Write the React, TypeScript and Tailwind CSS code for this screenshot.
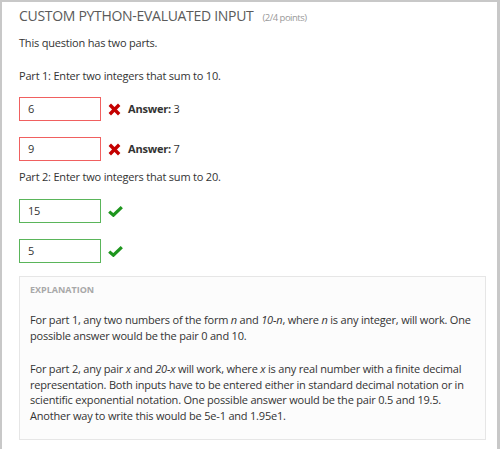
import React from 'react';

const font = { fontFamily: '"Open Sans", "Liberation Sans", sans-serif' };

const Cross = () => (
  <svg width="13" height="13" viewBox="0 0 13 13" className="shrink-0">
    <path d="M1.8 1.8 L11.2 11.2 M11.2 1.8 L1.8 11.2" stroke="#c40000" strokeWidth="3.4" />
  </svg>
);

const Check = () => (
  <svg width="15" height="11" viewBox="0 0 15 11" className="shrink-0">
    <path d="M1.2 5.6 L5.4 9.2 L13.8 1.2" stroke="#1e961e" strokeWidth="3.2" fill="none" />
  </svg>
);

interface FieldProps {
  value: string;
  ok: boolean;
  answer?: string;
}

const Field: React.FC<FieldProps> = ({ value, ok, answer }) => (
  <div className="flex items-center gap-[7px]">
    <div
      className={`w-[82px] h-[24px] flex items-center px-[8px] text-[11px] text-[#333] bg-white border ${
        ok ? 'border-[#5ab55a]' : 'border-[#f06060]'
      }`}
    >
      {value}
    </div>
    {ok ? <Check /> : <Cross />}
    {answer && (
      <span className="text-[11px] text-[#333] tracking-[-0.2px]">
        <b className="font-bold">Answer:</b> {answer}
      </span>
    )}
  </div>
);

export default function App() {
  return (
    <div className="w-[500px] h-[449px] bg-white overflow-hidden" style={font}>
      <div className="h-full border-l-2 border-t-2 border-r-[3px] border-[#c8c8c8] pl-[17px] pr-[11px] pt-[4px] text-[11px] leading-[16px] tracking-[-0.2px] text-[#333]">
        <div className="flex items-baseline gap-[9px] h-[20px] leading-[20px]">
          <h2 className="text-[14px] tracking-[-0.3px] text-[#5a5a5a] font-normal">CUSTOM PYTHON-EVALUATED INPUT</h2>
          <span className="text-[9.5px] tracking-[-0.5px] text-[#999]">(2/4 points)</span>
        </div>
        <p className="mt-[9px]">This question has two parts.</p>
        <p className="mt-[17px]">Part 1: Enter two integers that sum to 10.</p>
        <div className="mt-[13px] flex flex-col gap-[16px]">
          <Field value="6" ok={false} answer="3" />
          <Field value="9" ok={false} answer="7" />
        </div>
        <p className="mt-[8px]">Part 2: Enter two integers that sum to 20.</p>
        <div className="mt-[14px] flex flex-col gap-[16px]">
          <Field value="15" ok={true} />
          <Field value="5" ok={true} />
        </div>
        <div className="mt-[13px] border border-[#e6e6e6] bg-[#fcfcfc] px-[10px] pt-[6px] pb-[15px] leading-[15.6px]">
          <div className="text-[9px] leading-[14px] font-bold text-[#a8a8a8] tracking-[0px]">EXPLANATION</div>
          <p className="mt-[15px] whitespace-nowrap">
            For part 1, any two numbers of the form <i>n</i> and <i>10-n</i>, where <i>n</i> is any integer, will work. One
            <br />
            possible answer would be the pair 0 and 10.
          </p>
          <p className="mt-[18px] whitespace-nowrap">
            For part 2, any pair <i>x</i> and <i>20-x</i> will work, where <i>x</i> is any real number with a finite decimal
            <br />
            representation. Both inputs have to be entered either in standard decimal notation or in
            <br />
            scientific exponential notation. One possible answer would be the pair 0.5 and 19.5.
            <br />
            Another way to write this would be 5e-1 and 1.95e1.
          </p>
        </div>
      </div>
    </div>
  );
}
